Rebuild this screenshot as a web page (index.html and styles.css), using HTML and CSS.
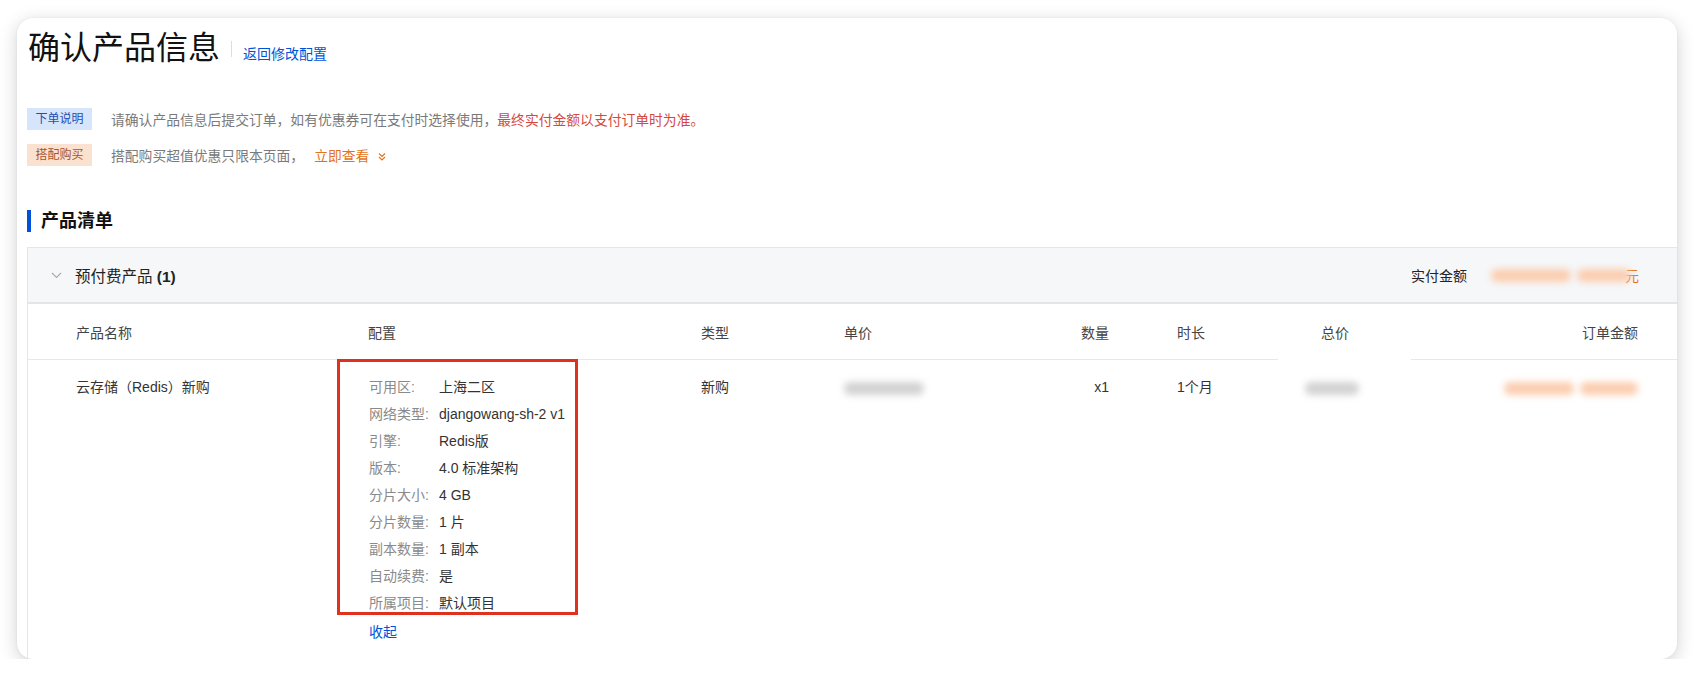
FILE: index.html
```html
<!DOCTYPE html>
<html lang="zh-CN">

<head>
  <meta charset="UTF-8">
  <title>确认产品信息</title>
  <link rel="stylesheet" href="styles.css">
</head>

<body>
  <div class="window">
    <header class="head">
      <h1>确认产品信息</h1>
      <span class="sep"></span>
      <a class="link" href="#">返回修改配置</a>
    </header>

    <div class="notices">
      <div class="notice">
        <span class="tag tag-blue">下单说明</span>
        <p>请确认产品信息后提交订单，如有优惠券可在支付时选择使用，<em class="warn">最终实付金额以支付订单时为准。</em></p>
      </div>
      <div class="notice">
        <span class="tag tag-orange">搭配购买</span>
        <p>搭配购买超值优惠只限本页面，<a class="more" href="#">立即查看
          <svg width="10" height="10" viewBox="0 0 10 10"><path d="M2 1.5l3 3 3-3M2 5l3 3 3-3" fill="none" stroke="currentColor" stroke-width="1.1"/></svg></a></p>
      </div>
    </div>

    <h2 class="section">产品清单</h2>

    <div class="table">
      <div class="group">
        <svg class="caret" width="11" height="7" viewBox="0 0 11 7"><path d="M1 1l4.5 4.5L10 1" fill="none" stroke="currentColor" stroke-width="1.1"/></svg>
        <span class="group-title">预付费产品 <b>(1)</b></span>
        <span class="paid">实付金额</span>
        <span class="blur orange w80"></span>
        <span class="blur orange w54"></span>
        <span class="yuan">元</span>
      </div>

      <div class="row thead">
        <span>产品名称</span>
        <span>配置</span>
        <span>类型</span>
        <span>单价</span>
        <span class="right">数量</span>
        <span class="pad">时长</span>
        <span>总价</span>
        <span class="right">订单金额</span>
        <i class="patch"></i>
      </div>

      <div class="row tbody">
        <span>云存储（Redis）新购</span>
        <div class="config">
          <dl>
            <dt>可用区:</dt><dd>上海二区</dd>
            <dt>网络类型:</dt><dd>djangowang-sh-2 v1</dd>
            <dt>引擎:</dt><dd>Redis版</dd>
            <dt>版本:</dt><dd>4.0 标准架构</dd>
            <dt>分片大小:</dt><dd>4 GB</dd>
            <dt>分片数量:</dt><dd>1 片</dd>
            <dt>副本数量:</dt><dd>1 副本</dd>
            <dt>自动续费:</dt><dd>是</dd>
            <dt>所属项目:</dt><dd>默认项目</dd>
          </dl>
          <a class="link fold" href="#">收起</a>
          <i class="mark"></i>
        </div>
        <span>新购</span>
        <span><i class="blur gray w80"></i></span>
        <span class="right">x1</span>
        <span class="pad">1个月</span>
        <span class="shift"><i class="blur gray w54"></i></span>
        <span class="right"><i class="blur orange w70"></i><i class="blur orange w58"></i></span>
      </div>
    </div>
  </div>
</body>

</html>
```

FILE: styles.css
```css
body {
  margin: 0;
  background-color: #fff;
  font-family: "Liberation Sans", "Noto Sans CJK SC", sans-serif;
  font-size: 14px;
  color: #333;
}

a {
  text-decoration: none;
}

.window {
  box-sizing: border-box;
  width: 1660px;
  height: 641px;
  margin: 18px 0 0 17px;
  padding-left: 10px;
  border-radius: 16px;
  background-color: #fff;
  box-shadow: 0 4px 18px rgba(0, 0, 0, 0.18), 0 0 2px rgba(0, 0, 0, 0.08);
  overflow: hidden;
}

.head {
  display: flex;
  align-items: baseline;
  margin-top: 7px;
  height: 40px;

  & h1 {
    margin: 0 0 0 1px;
    font-family: "Noto Sans CJK SC", sans-serif;
    font-size: 32px;
    font-weight: 400;
    line-height: 40px;
    color: #111;
  }
}

.sep {
  align-self: center;
  width: 1px;
  height: 16px;
  margin: 8px 11px 0 11px;
  background-color: #ddd;
}

.link {
  color: #0052d9;
  font-size: 14px;
}

.notices {
  display: flex;
  flex-direction: column;
  gap: 14px;
  margin-top: 43px;
}

.notice {
  display: flex;
  align-items: center;
  height: 22px;

  & p {
    margin: 0 0 0 19px;
    color: #7a7a7a;
    font-size: 13.8px;
  }
}

.tag {
  width: 65px;
  height: 22px;
  line-height: 22px;
  text-align: center;
  font-size: 12px;
}

.tag-blue {
  background-color: #d6e4fc;
  color: #1f4fb0;
}

.tag-orange {
  background-color: #fbe2d0;
  color: #a8532a;
}

.warn {
  font-style: normal;
  color: #d4493f;
}

.more {
  margin-left: 10px;
  color: #e37318;

  & svg {
    margin-left: 4px;
    vertical-align: -1px;
  }
}

.section {
  margin: 44px 0 15px;
  padding-left: 10px;
  height: 22px;
  line-height: 22px;
  border-left: 4px solid #0052d9;
  font-size: 18px;
  font-weight: 700;
  color: #111;
}

.table {
  border: 1px solid #e6e6e6;
  border-right: 0;
}

.group {
  display: flex;
  align-items: center;
  height: 54px;
  padding: 0 38px 0 23px;
  background-color: #f6f7f9;
  border-bottom: 2px solid #e4e5e7;
}

.caret {
  color: #aaa;
}

.group-title {
  margin-left: 13px;
  font-size: 15.5px;
  color: #222;

  & b {
    font-weight: 700;
  }
}

.paid {
  margin-left: auto;
  margin-right: 18px;
  color: #222;
}

.yuan {
  margin-left: -6px;
  color: #e37318;
}

.row {
  position: relative;
  display: grid;
  grid-template-columns: 292px 333px 143px 205px 60px 212px 129px 188px;
  padding-left: 48px;
  border-bottom: 1px solid #e8e8e8;
}

.thead {
  height: 55px;
  align-items: center;
  color: #444;
}

.tbody {
  align-items: start;
  padding: 14px 0 40px 48px;
  line-height: 27px;
  color: #333;
}

.right {
  text-align: right;
}

.pad {
  padding-left: 68px;
}

.shift {
  margin-left: -16px;
}

.patch {
  position: absolute;
  left: 1250px;
  bottom: -3px;
  width: 133px;
  height: 8px;
  background-color: #fff;
}

.blur {
  display: inline-block;
  height: 13px;
  border-radius: 6px;
  filter: blur(3.5px);
  vertical-align: middle;
}

.gray {
  background-color: #d2d2d2;
}

.orange {
  background-color: #fbcdb0;
  margin-left: 6px;
}

.w80 {
  width: 80px;
}

.w54 {
  width: 54px;
}

.w70 {
  width: 70px;
}

.w58 {
  width: 58px;
}

.config {
  position: relative;

  & dl {
    display: grid;
    grid-template-columns: 70px auto;
    margin: 0 0 0 1px;
  }

  & dt {
    color: #8a8a8a;
  }

  & dd {
    margin: 0;
    color: #333;
  }
}

.fold {
  display: block;
  margin: 2px 0 0 1px;
}

.mark {
  position: absolute;
  left: -31px;
  top: -15px;
  width: 235px;
  height: 250px;
  border: 3px solid #e0301e;
}
```
